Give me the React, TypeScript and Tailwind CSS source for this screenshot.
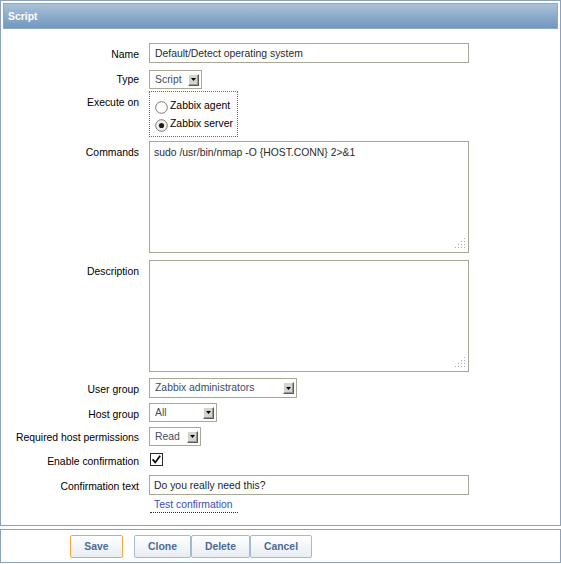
import React from "react";

function DropBtn() {
  return (
    <div className="w-[11px] h-[12px] bg-[#d6d3cc] border border-t-white border-l-white border-r-[#5a5a5a] border-b-[#5a5a5a] shadow-[inset_-1px_-1px_0_#9a9a9a] flex items-center justify-center">
      <svg width="5" height="3" viewBox="0 0 5 3">
        <path d="M0 0H5L2.5 3Z" fill="#000" />
      </svg>
    </div>
  );
}

function Select({ cls, value }: { cls: string; value: string }) {
  return (
    <div className={"border border-[#a9a796] bg-white flex items-center justify-between pl-[5px] pr-[2px] text-[#3f4c64] " + cls}>
      <span className="leading-[12px]">{value}</span>
      <DropBtn />
    </div>
  );
}

function Radio({ checked }: { checked?: boolean }) {
  return (
    <svg width="13" height="13" viewBox="0 0 13 13" className="shrink-0">
      <circle cx="6.5" cy="6.5" r="5.8" fill={checked ? "#f1f1f1" : "#fff"} stroke="#7a7a7a" strokeWidth="1" />
      {checked && <circle cx="6.5" cy="6.5" r="2.6" fill="#1c1c1c" />}
    </svg>
  );
}

function Grip() {
  const dots = [
    [9, 0],
    [6, 3],
    [9, 3],
    [3, 6],
    [6, 6],
    [9, 6],
    [0, 9],
    [3, 9],
    [6, 9],
    [9, 9],
  ];
  return (
    <svg width="10" height="10" viewBox="0 0 10 10" className="absolute right-[3px] bottom-[4px]">
      {dots.map(([x, y], i) => (
        <rect key={i} x={x} y={y} width="1" height="1" fill="#a8a8a8" />
      ))}
    </svg>
  );
}

function Row({ label, pt, mt, children }: { label: string; pt: string; mt: string; children: React.ReactNode }) {
  return (
    <div className={"flex items-start " + mt}>
      <div className={"w-[136px] shrink-0 text-right leading-[12px] text-black " + pt}>{label}</div>
      <div className="ml-[10px]">{children}</div>
    </div>
  );
}

export default function App() {
  return (
    <div className="w-[561px] h-[564px] bg-white font-['Liberation_Sans',Arial,sans-serif] text-[10.4px]">
      <div className="h-[526px] border border-[#8aa1bf] p-[2px] flex flex-col">
        <div className="h-[26px] shrink-0 bg-gradient-to-b from-[#a9c1d8] to-[#7197bf] border border-[#8ea7c4] flex items-center pl-[4px] pt-[1px]">
          <span className="text-white font-bold leading-[12px]">Script</span>
        </div>

        <Row label="Name" pt="pt-[6px]" mt="mt-[14px]">
          <div className="w-[320px] h-[20px] border border-[#a9a796] flex items-center pl-[5px] pt-[1px] text-[#2b2b2b] leading-[12px]">
            Default/Detect operating system
          </div>
        </Row>

        <Row label="Type" pt="pt-[4px]" mt="mt-[7px]">
          <Select cls="w-[53px] h-[19px]" value="Script" />
        </Row>

        <Row label="Execute on" pt="pt-[6px]" mt="mt-[2px]">
          <div className="w-[89px] h-[46px] border border-dotted border-[#4f70a8] pt-[5px] pl-[5px] flex flex-col">
            <div className="h-[18px] flex items-center gap-[2px]">
              <div className="translate-y-[1px]"><Radio /></div>
              <span className="leading-[12px] text-black">Zabbix agent</span>
            </div>
            <div className="h-[18px] flex items-center gap-[2px]">
              <div className="translate-y-[1px]"><Radio checked /></div>
              <span className="leading-[12px] text-black">Zabbix server</span>
            </div>
          </div>
        </Row>

        <Row label="Commands" pt="pt-[6px]" mt="mt-[4px]">
          <div className="relative w-[320px] h-[112px] border border-[#a9a796] pt-[5px] pl-[4px] text-[#2b2b2b] leading-[12px]">
            sudo /usr/bin/nmap -O {"{HOST.CONN}"} 2&gt;&amp;1
            <Grip />
          </div>
        </Row>

        <Row label="Description" pt="pt-[6px]" mt="mt-[7px]">
          <div className="relative w-[320px] h-[112px] border border-[#a9a796]">
            <Grip />
          </div>
        </Row>

        <Row label="User group" pt="pt-[6px]" mt="mt-[6px]">
          <Select cls="w-[148px] h-[20px]" value="Zabbix administrators" />
        </Row>

        <Row label="Host group" pt="pt-[6px]" mt="mt-[5px]">
          <Select cls="w-[68px] h-[19px]" value="All" />
        </Row>

        <Row label="Required host permissions" pt="pt-[5px]" mt="mt-[5px]">
          <Select cls="w-[52px] h-[19px]" value="Read" />
        </Row>

        <Row label="Enable confirmation" pt="pt-[3px]" mt="mt-[7px]">
          <svg width="13" height="13" viewBox="0 0 13 13" className="ml-[1px]">
            <rect x="0.5" y="0.5" width="12" height="12" fill="#fff" stroke="#2a2a2a" />
            <path d="M2.6 6.4 L5.2 9.4 L10.2 2.8" fill="none" stroke="#000" strokeWidth="1.7" />
          </svg>
        </Row>

        <Row label="Confirmation text" pt="pt-[6px]" mt="mt-[7px]">
          <div className="w-[320px] h-[20px] border border-[#a9a796] flex items-center pl-[4px] pt-[1px] text-[#1f1f1f] leading-[12px]">
            Do you really need this?
          </div>
          <div className="mt-[4px] ml-[1px] inline-block pl-[4px] pr-[5px] pb-[1px] border-b border-dotted border-[#1c2c6e] leading-[12px] text-[#3c4db0]">
            Test confirmation
          </div>
        </Row>
      </div>

      <div className="mt-[3px] h-[34px] border border-[#8aa1bf] pt-[5px] flex items-start">
        <div className="ml-[69px] w-[53px] h-[23px] rounded-[2px] border border-[#f4a845] bg-gradient-to-b from-white to-[#e8edf3] flex items-center justify-center font-bold text-[#4e6b95]">
          Save
        </div>
        <div className="ml-[11px] flex">
          <div className="w-[57px] h-[23px] rounded-[2px] border border-[#a6b9d0] bg-gradient-to-b from-white to-[#e8edf3] flex items-center justify-center font-bold text-[#4e6b95]">
            Clone
          </div>
          <div className="w-[59px] h-[23px] rounded-[2px] border border-[#a6b9d0] bg-gradient-to-b from-white to-[#e8edf3] flex items-center justify-center font-bold text-[#4e6b95]">
            Delete
          </div>
          <div className="w-[62px] h-[23px] rounded-[2px] border border-[#a6b9d0] bg-gradient-to-b from-white to-[#e8edf3] flex items-center justify-center font-bold text-[#4e6b95]">
            Cancel
          </div>
        </div>
      </div>
    </div>
  );
}
